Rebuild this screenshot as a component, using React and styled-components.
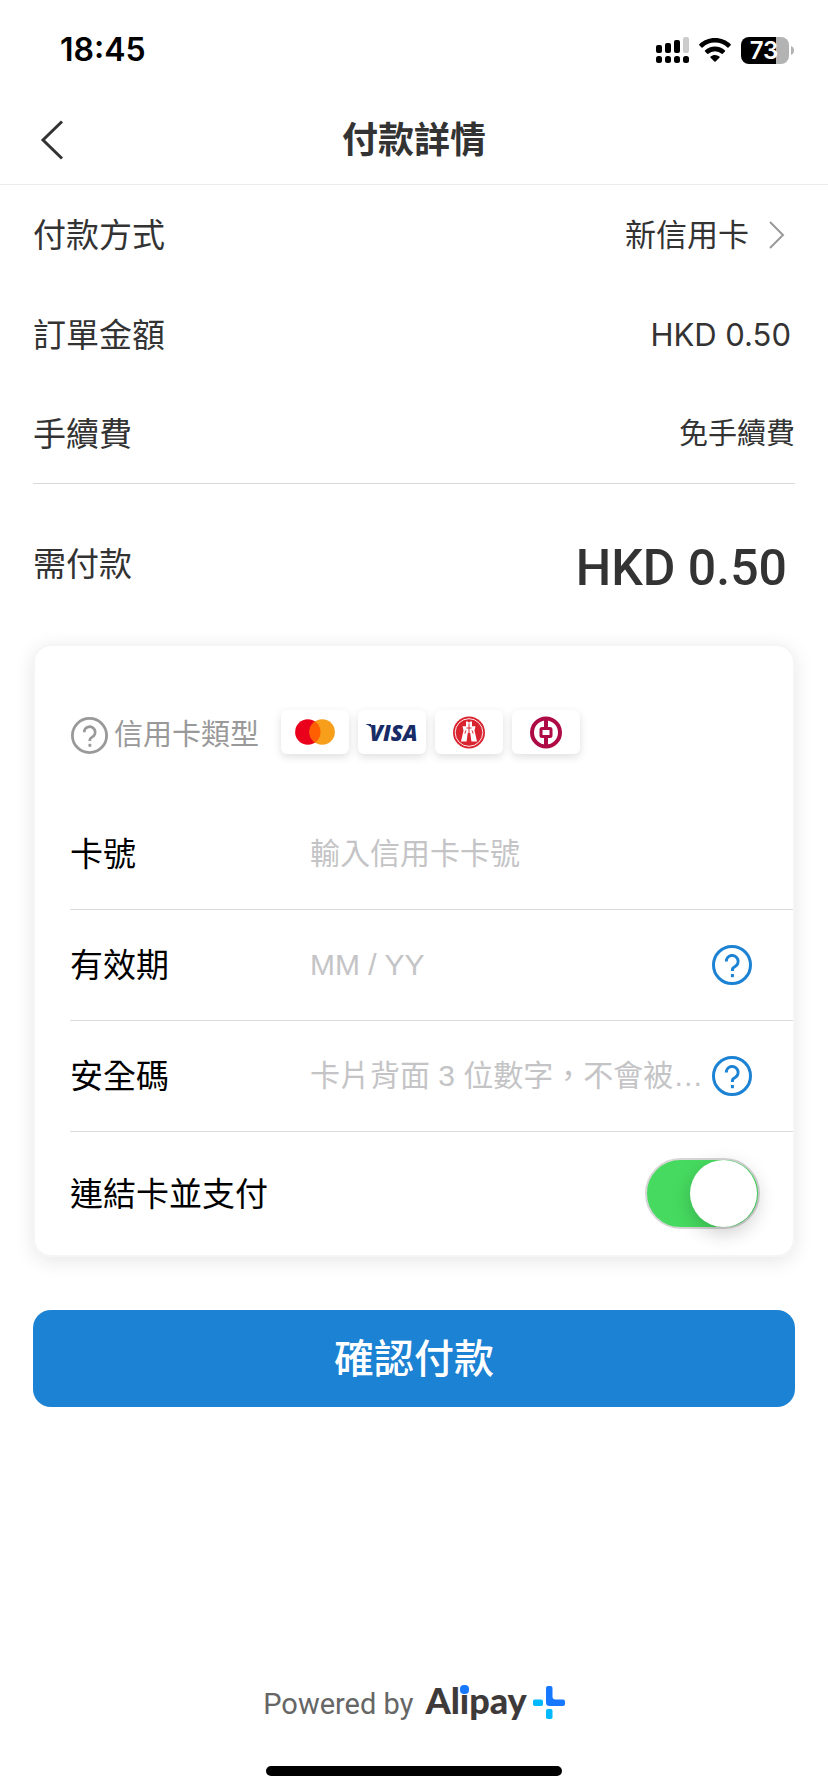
import React, { useState } from "react";
import styled, { createGlobalStyle } from "styled-components";

const GlobalStyle = createGlobalStyle`
  * { box-sizing: border-box; }
  body {
    margin: 0;
    background: #fff;
    color: #333;
    font-family: Inter, "Noto Sans CJK TC", sans-serif;
  }
  button, input { font: inherit; }
`;

const Page = styled.div`
  min-height: 100vh;
  display: flex;
  flex-direction: column;
`;

const StatusBar = styled.div`
  height: 96px;
  padding: 4px 34px 0 60px;
  display: flex;
  align-items: center;
  justify-content: space-between;
  color: #000;
`;

const Clock = styled.time`
  font-size: 32px;
  line-height: 40px;
  font-weight: 600;
`;

const StatusIcons = styled.div`
  display: flex;
  align-items: center;
  gap: 10px;
`;

const BatteryBox = styled.div`
  display: flex;
  align-items: center;
  gap: 2px;
`;

const BatteryLevel = styled.div`
  width: 48px;
  height: 27px;
  padding-right: 2px;
  border-radius: 8px;
  background: linear-gradient(to right, #000 73%, #b3b3b3 73%);
  color: #fff;
  font-size: 24px;
  line-height: 27px;
  font-weight: 600;
  text-align: center;
`;

const TitleBar = styled.header`
  height: 89px;
  padding: 0 36px;
  border-bottom: 1px solid #ececec;
  display: grid;
  grid-template-columns: 64px 1fr 64px;
  align-items: center;
`;

const IconButton = styled.button`
  padding: 0;
  border: 0;
  background: none;
  color: ${(p) => p.$color || "#333"};
  display: flex;
  align-items: center;
  flex: none;
  cursor: pointer;
`;

const Title = styled.h1`
  margin: 0;
  font-size: 36px;
  line-height: 48px;
  font-weight: 700;
  text-align: center;
`;

const Main = styled.main`
  padding: 0 33px;
`;

const Summary = styled.dl`
  margin: 0;
  display: grid;
  gap: 1px;
  border-bottom: 1px solid #d9d9d9;
`;

const SummaryRow = styled.div`
  height: ${(p) => p.$height || 99}px;
  display: flex;
  align-items: center;
  justify-content: space-between;
`;

const Term = styled.dt`
  font-size: 33px;
  line-height: 48px;
`;

const Value = styled.dd`
  margin: 0;
  font-size: ${(p) => p.$size || 29}px;
  line-height: 48px;
`;

const MethodButton = styled(IconButton)`
  gap: 20px;
  padding-right: 10px;
`;

const Amount = styled(Value)`
  padding-right: 4px;
`;

const TotalAmount = styled(Value)`
  padding: 8px 8px 0 0;
  font-family: Roboto, sans-serif;
  font-weight: 500;
  line-height: 64px;
`;

const Total = styled.dl`
  margin: 0;
`;

const Card = styled.form`
  padding-left: 35px;
  border: 2px solid #f5f5f5;
  border-radius: 18px;
  box-shadow: 0 4px 20px rgba(0, 0, 0, 0.1);
  color: #000;
`;

const CardTypes = styled.div`
  height: 153px;
  padding-top: 64px;
  display: flex;
  align-items: flex-start;
  gap: 22px;
`;

const TypesLabel = styled.div`
  height: 50px;
  padding-left: 1px;
  display: flex;
  align-items: center;
  gap: 6px;
  color: #999;
  font-size: 29px;
  line-height: 48px;
`;

const Brands = styled.div`
  display: flex;
  gap: 9px;
`;

const Brand = styled.div`
  width: 68px;
  height: 44px;
  border-radius: 6px;
  background: #fff;
  box-shadow: 0 3px 8px rgba(0, 0, 0, 0.13);
  display: flex;
  align-items: center;
  justify-content: center;
`;

const FieldRow = styled.div`
  height: 111px;
  padding-right: 41px;
  border-bottom: 1px solid #dcdcdc;
  display: grid;
  grid-template-columns: 240px 1fr 40px;
  align-items: center;
`;

const FieldLabel = styled.label`
  font-size: 33px;
  line-height: 48px;
`;

const TextField = styled.input`
  width: 100%;
  min-width: 0;
  height: 48px;
  padding: 0;
  border: 0;
  outline: 0;
  background: none;
  font-family: "Liberation Sans", "Noto Sans CJK TC", sans-serif;
  font-size: 30px;
  text-overflow: ellipsis;
  &::placeholder { color: #c4c4c6; opacity: 1; }
`;

const SwitchRow = styled.div`
  height: 123px;
  padding-right: 33px;
  display: flex;
  align-items: center;
  justify-content: space-between;
`;

const Switch = styled.input.attrs({ type: "checkbox", role: "switch" })`
  appearance: none;
  width: 115px;
  height: 71px;
  margin: 0;
  padding: 0 1px;
  border: 2px solid #d6d6d6;
  border-radius: 36px;
  background: #e9e9ea;
  display: flex;
  align-items: center;
  cursor: pointer;
  &::before {
    content: "";
    width: 67px;
    height: 67px;
    border-radius: 50%;
    background: #fff;
    box-shadow: 0 6px 20px rgba(0, 0, 0, 0.2);
  }
  &:checked {
    justify-content: flex-end;
    background: #46db60;
  }
`;

const PayButton = styled.button`
  width: 100%;
  height: 97px;
  margin-top: 53px;
  padding: 0;
  border: 0;
  border-radius: 18px;
  background: #1c82d3;
  color: #fff;
  font-size: 40px;
  line-height: 56px;
  font-weight: 500;
  cursor: pointer;
`;

const Footer = styled.footer`
  margin-top: auto;
  padding-bottom: 16px;
  display: flex;
  flex-direction: column;
  align-items: center;
  gap: 40px;
`;

const PoweredBy = styled.div`
  display: flex;
  align-items: baseline;
  color: #666;
  font-family: Roboto, sans-serif;
  font-size: 29px;
  line-height: 44px;
`;

const AlipayName = styled.span`
  margin: 0 6px 0 12px;
  color: #3e3a39;
  font-family: Lato, sans-serif;
  font-size: 36px;
  font-weight: 900;
`;

const DottedI = styled.span`
  position: relative;
  &::before {
    content: "";
    position: absolute;
    top: 7px;
    left: 0;
    width: 9px;
    height: 9px;
    border-radius: 4px;
    background: #1677ff;
  }
`;

const HomeIndicator = styled.div`
  width: 296px;
  height: 10px;
  border-radius: 5px;
  background: #000;
`;

const SignalIcon = () => (
  <svg width="33" height="26" viewBox="0 0 33 26" aria-hidden="true">
    <rect x="0" y="8" width="6" height="8" rx="2" />
    <rect x="9" y="6" width="6" height="10" rx="2" />
    <rect x="18" y="3" width="6" height="13" rx="2" />
    <rect x="27" y="0" width="6" height="16" rx="2" fill="#ccc" />
    {[0, 9, 18, 27].map((x) => (
      <rect key={x} x={x} y="19" width="6" height="7" rx="2.5" />
    ))}
  </svg>
);

const WifiIcon = () => (
  <svg width="32" height="25" viewBox="0 0 32 25" aria-hidden="true">
    <path d="M16 0C9.800 0 4.200 2.400.3 6.200a.8.8 0 0 0 0 1.100l2.200 2.200c.3.300.8.300 1.100 0A17.600 17.600 0 0 1 16 4.600c4.800 0 9.200 1.900 12.400 4.900.3.300.8.300 1.100 0l2.200-2.200a.8.800 0 0 0 0-1.100C27.800 2.400 22.200 0 16 0z" />
    <path d="M16 8.500c-3.900 0-7.400 1.500-10 3.900a.8.8 0 0 0 0 1.100l2.300 2.300c.3.300.7.300 1 0a9.800 9.800 0 0 1 13.400 0c.3.300.7.300 1 0l2.300-2.300a.8.8 0 0 0 0-1.100c-2.600-2.400-6.100-3.900-10-3.900z" />
    <path d="M16 17c-1.700 0-3.200.6-4.400 1.600a.7.7 0 0 0 0 1.100l3.800 3.800c.4.400.8.400 1.200 0l3.800-3.800a.7.7 0 0 0 0-1.100A6.800 6.800 0 0 0 16 17z" />
  </svg>
);

const BatteryTip = () => (
  <svg width="3" height="9" viewBox="0 0 3 9" aria-hidden="true">
    <path d="M0 0c2 .8 3 2.500 3 4.500S2 8.200 0 9z" fill="#b3b3b3" />
  </svg>
);

const BackIcon = () => (
  <svg width="32" height="40" viewBox="0 0 32 40" aria-hidden="true">
    <path d="M26 1.500 7 20l19 18.500" fill="none" stroke="currentColor" strokeWidth="3" />
  </svg>
);

const ForwardIcon = () => (
  <svg width="16" height="28" viewBox="0 0 16 28" aria-hidden="true">
    <path d="M1 1l13 13L1 27" fill="none" stroke="#999" strokeWidth="2" />
  </svg>
);

const HelpIcon = ({ size = 40 }) => (
  <svg width={size} height={size} viewBox="0 0 40 40" fill="none" stroke="currentColor" strokeWidth="3" aria-hidden="true">
    <circle cx="20" cy="20" r="18.500" />
    <path d="M14.300 16.500a5.900 5.900 0 1 1 8.800 5c-1.900 1-2.700 1.700-2.700 3.200v1.300" />
    <path d="M20.400 29v3.200" />
  </svg>
);

const MastercardLogo = () => (
  <svg width="40" height="26" viewBox="0 0 40 26" role="img" aria-label="Mastercard">
    <circle cx="12.800" cy="13" r="12.700" fill="#eb001b" />
    <circle cx="27.200" cy="13" r="12.700" fill="#f79e1b" />
    <path d="M20 2.500a12.700 12.700 0 0 1 0 21 12.700 12.700 0 0 1 0-21z" fill="#ff5f00" />
  </svg>
);

const VisaMark = styled.span`
  display: flex;
  color: #172b67;
  font-family: "Open Sans", sans-serif;
  font-size: 22px;
  line-height: 24px;
  font-weight: 800;
  font-style: italic;
`;

const VisaWing = styled.svg`
  margin: 4px -3px 0 0;
`;

const HangSengLogo = () => (
  <svg width="32" height="33" viewBox="0 0 32 33" role="img" aria-label="Hang Seng Bank">
    <circle cx="16" cy="16.500" r="16" fill="#d9232e" />
    <circle cx="16" cy="16.500" r="13.800" fill="none" stroke="#fff" strokeWidth=".9" />
    <path d="M13 5.500h1.600l1.400 1.200 1.400-1.200H19v4.700h3.500l-1 4.300 2.500 11h-5.600L17.300 17h-2.600l-1.100 8.500H8l2.500-11-1-4.300H13z" fill="#fff" />
    <path d="M16 7.500V17M13.500 12h5M13 14.500l-1.200 3M19 14.500l1.200 3" stroke="#d9232e" strokeWidth="1" />
  </svg>
);

const BankOfChinaLogo = () => (
  <svg width="32" height="33" viewBox="0 0 32 33" fill="none" stroke="#ae0a46" strokeWidth="4" role="img" aria-label="Bank of China">
    <circle cx="16" cy="16.500" r="14" />
    <path d="M16 2v9M16 22v9" />
    <rect x="11" y="12.500" width="10" height="8" rx="1" strokeWidth="3" />
  </svg>
);

const PlusSvg = styled.svg`
  align-self: center;
`;

const PlusLogo = () => (
  <PlusSvg width="32" height="33" viewBox="0 0 32 33" aria-hidden="true">
    <path d="M13 2a2 2 0 0 1 2-2h2.500a2 2 0 0 1 2 2v8.500a3 3 0 0 0 3 3H30a2 2 0 0 1 2 2V18a2 2 0 0 1-2 2H16.500a3.500 3.500 0 0 1-3.500-3.500z" fill="#1677ff" />
    <rect x="0" y="13.500" width="10" height="6.500" rx="1.800" fill="#00b9ff" />
    <rect x="13" y="23" width="6.500" height="10" rx="1.800" fill="#00b9ff" />
  </PlusSvg>
);

const fields = [
  { id: "number", label: "卡號", placeholder: "輸入信用卡卡號" },
  { id: "expiry", label: "有效期", placeholder: "MM / YY", help: true },
  { id: "code", label: "安全碼", placeholder: "卡片背面 3 位數字，不會被儲存", help: true },
];

export default function App() {
  const [linked, setLinked] = useState(true);

  return (
    <Page>
      <GlobalStyle />
      <StatusBar>
        <Clock>18:45</Clock>
        <StatusIcons>
          <SignalIcon />
          <WifiIcon />
          <BatteryBox>
            <BatteryLevel>73</BatteryLevel>
            <BatteryTip />
          </BatteryBox>
        </StatusIcons>
      </StatusBar>
      <TitleBar>
        <IconButton type="button" aria-label="返回"><BackIcon /></IconButton>
        <Title>付款詳情</Title>
      </TitleBar>
      <Main>
        <Summary>
          <SummaryRow>
            <Term>付款方式</Term>
            <Value $size={31}>
              <MethodButton type="button">新信用卡<ForwardIcon /></MethodButton>
            </Value>
          </SummaryRow>
          <SummaryRow>
            <Term>訂單金額</Term>
            <Amount $size={31}>HKD 0.50</Amount>
          </SummaryRow>
          <SummaryRow $height={98}>
            <Term>手續費</Term>
            <Value>免手續費</Value>
          </SummaryRow>
        </Summary>
        <Total>
          <SummaryRow $height={160}>
            <Term>需付款</Term>
            <TotalAmount $size={50}>HKD 0.50</TotalAmount>
          </SummaryRow>
        </Total>
        <Card id="card" onSubmit={(e) => e.preventDefault()}>
          <CardTypes>
            <TypesLabel>
              <IconButton type="button" aria-label="說明" $color="#999"><HelpIcon size={37} /></IconButton>
              信用卡類型
            </TypesLabel>
            <Brands>
              <Brand><MastercardLogo /></Brand>
              <Brand>
                <VisaMark>
                  <VisaWing width="6" height="5" viewBox="0 0 6 5" aria-hidden="true">
                    <path d="M0 0h5l1 5C4.500 2.500 2.500 1.200 0 .6z" fill="currentColor" />
                  </VisaWing>
                  VISA
                </VisaMark>
              </Brand>
              <Brand><HangSengLogo /></Brand>
              <Brand><BankOfChinaLogo /></Brand>
            </Brands>
          </CardTypes>
          {fields.map((f) => (
            <FieldRow key={f.id}>
              <FieldLabel htmlFor={f.id}>{f.label}</FieldLabel>
              <TextField id={f.id} placeholder={f.placeholder} />
              {f.help && (
                <IconButton type="button" aria-label="說明" $color="#1c82d3"><HelpIcon /></IconButton>
              )}
            </FieldRow>
          ))}
          <SwitchRow>
            <FieldLabel htmlFor="link">連結卡並支付</FieldLabel>
            <Switch id="link" checked={linked} onChange={(e) => setLinked(e.target.checked)} />
          </SwitchRow>
        </Card>
        <PayButton type="submit" form="card">確認付款</PayButton>
      </Main>
      <Footer>
        <PoweredBy>
          Powered by
          <AlipayName>Al<DottedI>i</DottedI>pay</AlipayName>
          <PlusLogo />
        </PoweredBy>
        <HomeIndicator />
      </Footer>
    </Page>
  );
}
